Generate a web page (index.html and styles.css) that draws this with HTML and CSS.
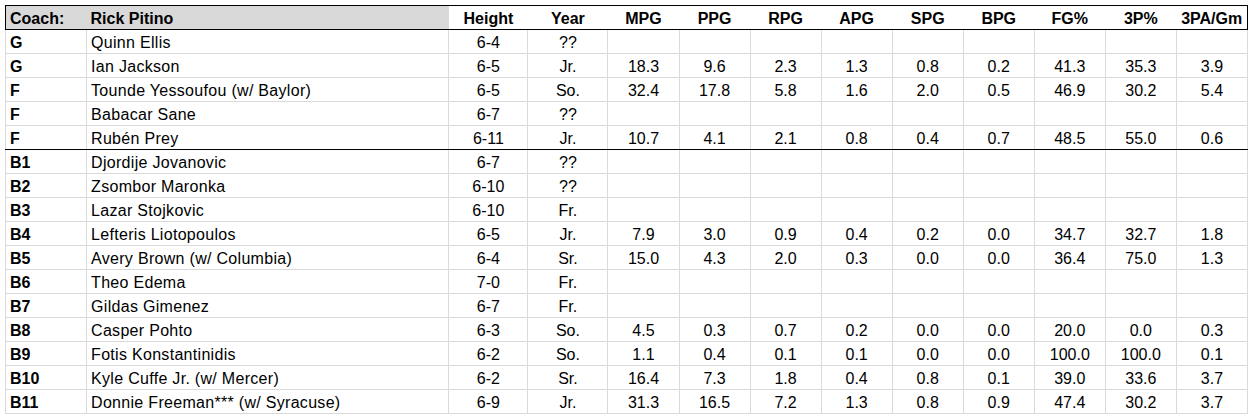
FILE: index.html
```html
<!DOCTYPE html>
<html lang="en">
<head>
<meta charset="utf-8">
<title>Roster</title>
<link rel="stylesheet" href="styles.css">
</head>
<body>
<table class="sheet">
  <colgroup>
    <col class="c-pos">
    <col class="c-name">
    <col class="c-height">
    <col class="c-year">
    <col class="c-stat"><col class="c-stat"><col class="c-stat"><col class="c-stat"><col class="c-stat"><col class="c-stat"><col class="c-stat"><col class="c-stat"><col class="c-stat">
  </colgroup>
  <thead>
    <tr class="head">
      <th class="left shade">Coach:</th>
      <th class="left shade">Rick Pitino</th>
      <th>Height</th>
      <th>Year</th>
      <th>MPG</th>
      <th>PPG</th>
      <th>RPG</th>
      <th>APG</th>
      <th>SPG</th>
      <th>BPG</th>
      <th>FG%</th>
      <th>3P%</th>
      <th>3PA/Gm</th>
    </tr>
  </thead>
  <tbody>
    <tr><td class="pos">G</td><td class="name">Quinn Ellis</td><td>6-4</td><td>??</td><td></td><td></td><td></td><td></td><td></td><td></td><td></td><td></td><td></td></tr>
    <tr><td class="pos">G</td><td class="name">Ian Jackson</td><td>6-5</td><td>Jr.</td><td>18.3</td><td>9.6</td><td>2.3</td><td>1.3</td><td>0.8</td><td>0.2</td><td>41.3</td><td>35.3</td><td>3.9</td></tr>
    <tr><td class="pos">F</td><td class="name">Tounde Yessoufou (w/ Baylor)</td><td>6-5</td><td>So.</td><td>32.4</td><td>17.8</td><td>5.8</td><td>1.6</td><td>2.0</td><td>0.5</td><td>46.9</td><td>30.2</td><td>5.4</td></tr>
    <tr><td class="pos">F</td><td class="name">Babacar Sane</td><td>6-7</td><td>??</td><td></td><td></td><td></td><td></td><td></td><td></td><td></td><td></td><td></td></tr>
    <tr class="group-end"><td class="pos">F</td><td class="name">Rubén Prey</td><td>6-11</td><td>Jr.</td><td>10.7</td><td>4.1</td><td>2.1</td><td>0.8</td><td>0.4</td><td>0.7</td><td>48.5</td><td>55.0</td><td>0.6</td></tr>
    <tr><td class="pos">B1</td><td class="name">Djordije Jovanovic</td><td>6-7</td><td>??</td><td></td><td></td><td></td><td></td><td></td><td></td><td></td><td></td><td></td></tr>
    <tr><td class="pos">B2</td><td class="name">Zsombor Maronka</td><td>6-10</td><td>??</td><td></td><td></td><td></td><td></td><td></td><td></td><td></td><td></td><td></td></tr>
    <tr><td class="pos">B3</td><td class="name">Lazar Stojkovic</td><td>6-10</td><td>Fr.</td><td></td><td></td><td></td><td></td><td></td><td></td><td></td><td></td><td></td></tr>
    <tr><td class="pos">B4</td><td class="name">Lefteris Liotopoulos</td><td>6-5</td><td>Jr.</td><td>7.9</td><td>3.0</td><td>0.9</td><td>0.4</td><td>0.2</td><td>0.0</td><td>34.7</td><td>32.7</td><td>1.8</td></tr>
    <tr><td class="pos">B5</td><td class="name">Avery Brown (w/ Columbia)</td><td>6-4</td><td>Sr.</td><td>15.0</td><td>4.3</td><td>2.0</td><td>0.3</td><td>0.0</td><td>0.0</td><td>36.4</td><td>75.0</td><td>1.3</td></tr>
    <tr><td class="pos">B6</td><td class="name">Theo Edema</td><td>7-0</td><td>Fr.</td><td></td><td></td><td></td><td></td><td></td><td></td><td></td><td></td><td></td></tr>
    <tr><td class="pos">B7</td><td class="name">Gildas Gimenez</td><td>6-7</td><td>Fr.</td><td></td><td></td><td></td><td></td><td></td><td></td><td></td><td></td><td></td></tr>
    <tr><td class="pos">B8</td><td class="name">Casper Pohto</td><td>6-3</td><td>So.</td><td>4.5</td><td>0.3</td><td>0.7</td><td>0.2</td><td>0.0</td><td>0.0</td><td>20.0</td><td>0.0</td><td>0.3</td></tr>
    <tr><td class="pos">B9</td><td class="name">Fotis Konstantinidis</td><td>6-2</td><td>So.</td><td>1.1</td><td>0.4</td><td>0.1</td><td>0.1</td><td>0.0</td><td>0.0</td><td>100.0</td><td>100.0</td><td>0.1</td></tr>
    <tr><td class="pos">B10</td><td class="name">Kyle Cuffe Jr. (w/ Mercer)</td><td>6-2</td><td>Sr.</td><td>16.4</td><td>7.3</td><td>1.8</td><td>0.4</td><td>0.8</td><td>0.1</td><td>39.0</td><td>33.6</td><td>3.7</td></tr>
    <tr><td class="pos">B11</td><td class="name">Donnie Freeman*** (w/ Syracuse)</td><td>6-9</td><td>Jr.</td><td>31.3</td><td>16.5</td><td>7.2</td><td>1.3</td><td>0.8</td><td>0.9</td><td>47.4</td><td>30.2</td><td>3.7</td></tr>
  </tbody>
</table>
</body>
</html>
```

FILE: styles.css
```css
html, body {
  margin: 0;
  padding: 0;
  background: #ffffff;
}

body {
  font-family: "Liberation Sans", Arial, sans-serif;
  font-size: 16px;
  color: #000000;
}

.sheet {
  margin: 5px 0 0 5px;
  border-collapse: collapse;
  table-layout: fixed;
  width: 1243px;
  border: 1px solid #000000;
}

.c-pos { width: 81px; }
.c-name { width: 362px; }
.c-height { width: 79px; }
.c-year { width: 80px; }
.c-stat { width: 71px; }

.sheet tr {
  height: 24px;
}

.sheet th,
.sheet td {
  padding: 2px 4px 0 4px;
  line-height: 21px;
  white-space: nowrap;
  overflow: hidden;
  text-align: center;
  vertical-align: middle;
}

.sheet th {
  font-weight: bold;
  border-top: none;
  border-left: none;
  border-right: none;
  border-bottom: 1px solid #000000;
}

.sheet th.left {
  text-align: left;
}

.sheet th.shade {
  background: #d9d9d9;
}

.sheet td {
  border: 1px solid #dadada;
}

.sheet td.pos {
  text-align: left;
  font-weight: bold;
}

.sheet td.name {
  text-align: left;
  letter-spacing: 0.3px;
}

.sheet tr.group-end td {
  border-bottom: 1px solid #000000;
}
```
